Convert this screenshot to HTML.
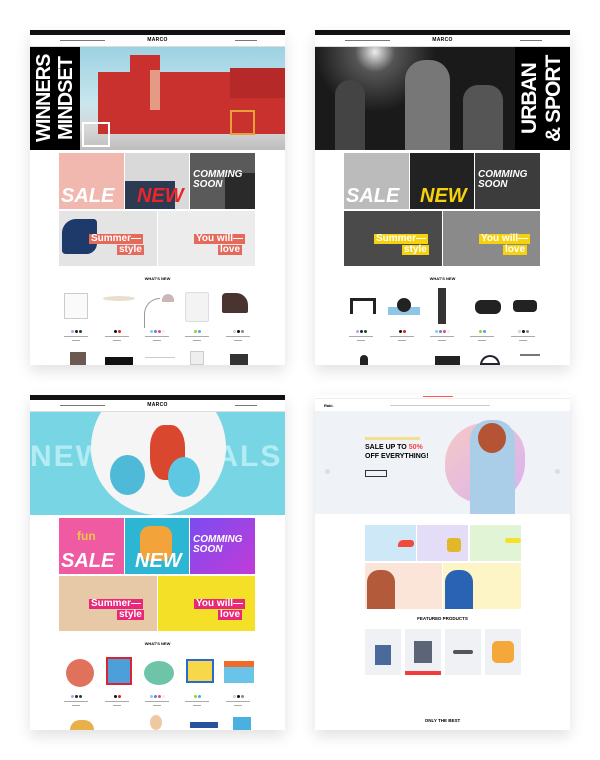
<!DOCTYPE html>
<html><head><meta charset="utf-8"><style>
*{margin:0;padding:0;box-sizing:border-box}
body{width:600px;height:760px;background:#fff;position:relative;overflow:hidden;font-family:"Liberation Sans",sans-serif}
.card{position:absolute;width:255px;height:335px;background:#fff;overflow:hidden;box-shadow:0 6px 14px rgba(0,0,0,.12)}
.a{position:absolute}
.tb{left:0;top:0;width:255px;height:5px;background:#111}
.nav{left:0;top:5px;width:255px;height:12px;background:#fff;border-bottom:1px solid #ddd}
.logo{position:absolute;left:0;width:255px;top:7px;text-align:center;font-size:5px;font-weight:bold;letter-spacing:.3px}
.tile{position:absolute;overflow:hidden}
.big{font-weight:900;font-style:italic;position:absolute;line-height:1}
.lbl{position:absolute;font-weight:bold;font-size:10px;line-height:10px;padding:0 2px}
.wn{position:absolute;left:0;width:255px;top:246px;text-align:center;font-size:4px;font-weight:bold}
.meta{position:absolute;top:300px;width:30px;text-align:center;font-size:0}
.meta i{display:inline-block;width:3px;height:3px;border-radius:50%;margin:0 .5px}
.meta b{display:block;height:1px;background:#aaa;margin:3px auto 0;width:24px}
.meta u{display:block;height:1px;background:#aaa;margin:3px auto 0;width:8px}
.nl{position:absolute;top:10px;height:1px;background:#777}
.hero{position:absolute;left:0;top:17px;width:255px;height:103px;overflow:hidden}
.vt{position:absolute;top:0;height:103px;background:#000;color:#fff;font-weight:900;writing-mode:vertical-rl;transform:rotate(180deg);white-space:nowrap;letter-spacing:-1px;text-align:center}
</style></head><body>

<!-- Card 1: furniture -->
<div class="card" style="left:30px;top:30px">
 <div class="a tb"></div><div class="a nav"></div><div class="logo">MARCO</div>
 <div class="nl" style="left:30px;width:45px"></div><div class="nl" style="left:205px;width:22px"></div>
 <div class="hero" style="background:linear-gradient(#9cd2e2,#c9e6ee 55%,#d6d6d6 80%,#bdbdbd)">
  <div class="a" style="left:68px;top:25px;width:187px;height:62px;background:#c8312e"></div>
  <div class="a" style="left:100px;top:8px;width:30px;height:35px;background:#c8312e"></div>
  <div class="a" style="left:200px;top:21px;width:55px;height:30px;background:#b52a28"></div>
  <div class="a" style="left:120px;top:23px;width:10px;height:40px;background:#e59a85"></div>
  <div class="a" style="left:200px;top:63px;width:25px;height:25px;border:2px solid #e8a03a"></div>
  <div class="a" style="left:52px;top:75px;width:28px;height:25px;border:2px solid #fff"></div>
  <div class="vt" style="left:0;width:50px;font-size:20px;line-height:22px;padding:0 3px">WINNERS<br>MINDSET</div>
 </div>
 <div class="tile" style="left:29px;top:123px;width:65px;height:56px;background:#f0b8ae"><div class="big" style="left:2px;top:33px;color:#fff;font-size:20px">SALE</div></div>
 <div class="tile" style="left:95px;top:123px;width:64px;height:56px;background:#d9d9d9"><div class="a" style="left:0;top:28px;width:50px;height:28px;background:#2d3b52"></div><div class="big" style="left:12px;top:33px;color:#e8262c;font-size:20px">NEW</div></div>
 <div class="tile" style="left:160px;top:123px;width:65px;height:56px;background:#5a5a5a"><div class="a" style="left:35px;top:20px;width:30px;height:36px;background:#2a2a2a"></div><div class="big" style="left:3px;top:17px;color:#fff;font-size:10px">COMMING<br>SOON</div></div>
 <div class="tile" style="left:29px;top:181px;width:98px;height:55px;background:#e4e4e4"><div class="a" style="left:3px;top:8px;width:35px;height:35px;border-radius:40% 10% 30% 10%;background:#1e3a6a"></div><div class="lbl" style="left:30px;top:23px;background:#e46a5c;color:#fff">Summer—</div><div class="lbl" style="left:58px;top:34px;background:#e46a5c;color:#fff">style</div></div>
 <div class="tile" style="left:128px;top:181px;width:97px;height:55px;background:#ececec"><div class="lbl" style="left:36px;top:23px;background:#e46a5c;color:#fff">You will—</div><div class="lbl" style="left:60px;top:34px;background:#e46a5c;color:#fff">love</div></div>
 <div class="wn">WHAT'S NEW</div>
 <div class="a" style="left:34px;top:263px;width:24px;height:26px;border:1px solid #ccc;background:#fafafa"></div>
 <div class="a" style="left:73px;top:266px;width:32px;height:5px;background:#e8dfcc;border-radius:50%"></div>
 <div class="a" style="left:114px;top:268px;width:16px;height:30px;border-top:1px solid #999;border-left:1px solid #999;border-radius:20px 0 0 0"></div>
 <div class="a" style="left:132px;top:264px;width:12px;height:8px;background:#c9b8b5;border-radius:8px 8px 0 0"></div>
 <div class="a" style="left:155px;top:262px;width:24px;height:30px;background:#f3f3f3;border:1px solid #ddd;border-radius:2px"></div>
 <div class="a" style="left:192px;top:263px;width:26px;height:20px;background:#4a3430;border-radius:4px 12px 2px 2px"></div>
 <div class="meta" style="left:31px"><i style="background:#b9a4e8"></i><i style="background:#223"></i><i style="background:#1a4a2a"></i><b></b><u></u></div>
 <div class="meta" style="left:72px"><i style="background:#111"></i><i style="background:#d22"></i><b></b><u></u></div>
 <div class="meta" style="left:112px"><i style="background:#8cc8f0"></i><i style="background:#6a7ae0"></i><i style="background:#e04a7a"></i><i style="background:#eee"></i><b></b><u></u></div>
 <div class="meta" style="left:152px"><i style="background:#9ad02a"></i><i style="background:#4aa8e0"></i><b></b><u></u></div>
 <div class="meta" style="left:193px"><i style="background:#eee;border:1px solid #ccc"></i><i style="background:#111"></i><i style="background:#888"></i><b></b><u></u></div>
 <div class="a" style="left:40px;top:322px;width:16px;height:13px;background:#6a5a50"></div>
 <div class="a" style="left:75px;top:327px;width:28px;height:8px;background:#111"></div>
 <div class="a" style="left:115px;top:327px;width:30px;height:8px;border-top:1px solid #ccc"></div>
 <div class="a" style="left:160px;top:321px;width:14px;height:14px;background:#eee;border:1px solid #ccc"></div>
 <div class="a" style="left:200px;top:324px;width:18px;height:11px;background:#333"></div>
</div>

<!-- Card 2: sport -->
<div class="card" style="left:315px;top:30px">
 <div class="a tb"></div><div class="a nav"></div><div class="logo">MARCO</div>
 <div class="nl" style="left:30px;width:45px"></div><div class="nl" style="left:205px;width:22px"></div>
 <div class="hero" style="background:radial-gradient(circle at 60px 5px,#eee 0,#555 20px,#1a1a1a 60px)">
  <div class="a" style="left:90px;top:13px;width:45px;height:90px;background:#777;border-radius:20px 20px 0 0"></div>
  <div class="a" style="left:20px;top:33px;width:30px;height:70px;background:#444;border-radius:15px 15px 0 0"></div>
  <div class="a" style="left:148px;top:38px;width:40px;height:65px;background:#555;border-radius:15px 15px 0 0"></div>
  <div class="vt" style="left:200px;width:55px;font-size:21px;line-height:24px;padding:0 3px">URBAN<br>&amp; SPORT</div>
 </div>
 <div class="tile" style="left:29px;top:123px;width:65px;height:56px;background:#bbb"><div class="big" style="left:2px;top:33px;color:#fff;font-size:20px">SALE</div></div>
 <div class="tile" style="left:95px;top:123px;width:64px;height:56px;background:#222"><div class="big" style="left:10px;top:33px;color:#f6d20e;font-size:20px">NEW</div></div>
 <div class="tile" style="left:160px;top:123px;width:65px;height:56px;background:#3c3c3c"><div class="big" style="left:3px;top:17px;color:#fff;font-size:10px">COMMING<br>SOON</div></div>
 <div class="tile" style="left:29px;top:181px;width:98px;height:55px;background:#4a4a4a"><div class="lbl" style="left:30px;top:23px;background:#f6d20e;color:#fff">Summer—</div><div class="lbl" style="left:58px;top:34px;background:#f6d20e;color:#fff">style</div></div>
 <div class="tile" style="left:128px;top:181px;width:97px;height:55px;background:#8a8a8a"><div class="lbl" style="left:36px;top:23px;background:#f6d20e;color:#fff">You will—</div><div class="lbl" style="left:60px;top:34px;background:#f6d20e;color:#fff">love</div></div>
 <div class="wn">WHAT'S NEW</div>
 <div class="a" style="left:35px;top:268px;width:26px;height:16px;border:3px solid #222;border-bottom:none"></div>
 <div class="a" style="left:73px;top:277px;width:32px;height:8px;background:#8ec6e6"></div>
 <div class="a" style="left:82px;top:268px;width:14px;height:14px;background:#222;border-radius:50%"></div>
 <div class="a" style="left:123px;top:258px;width:8px;height:36px;background:#333"></div>
 <div class="a" style="left:160px;top:270px;width:26px;height:14px;background:#222;border-radius:6px"></div>
 <div class="a" style="left:198px;top:270px;width:24px;height:12px;background:#222;border-radius:4px"></div>
 <div class="meta" style="left:31px"><i style="background:#b9a4e8"></i><i style="background:#223"></i><i style="background:#1a4a2a"></i><b></b><u></u></div>
 <div class="meta" style="left:72px"><i style="background:#111"></i><i style="background:#d22"></i><b></b><u></u></div>
 <div class="meta" style="left:112px"><i style="background:#8cc8f0"></i><i style="background:#6a7ae0"></i><i style="background:#e04a7a"></i><i style="background:#eee"></i><b></b><u></u></div>
 <div class="meta" style="left:152px"><i style="background:#9ad02a"></i><i style="background:#4aa8e0"></i><b></b><u></u></div>
 <div class="meta" style="left:193px"><i style="background:#eee;border:1px solid #ccc"></i><i style="background:#111"></i><i style="background:#888"></i><b></b><u></u></div>
 <div class="a" style="left:45px;top:325px;width:8px;height:10px;background:#222;border-radius:4px 4px 0 0"></div>
 <div class="a" style="left:120px;top:326px;width:25px;height:9px;background:#222"></div>
 <div class="a" style="left:165px;top:325px;width:20px;height:10px;border:2px solid #223;border-radius:10px 10px 0 0"></div>
 <div class="a" style="left:205px;top:324px;width:20px;height:11px;border-top:2px solid #777"></div>
</div>

<!-- Card 3: toys -->
<div class="card" style="left:30px;top:395px">
 <div class="a tb"></div><div class="a nav"></div><div class="logo">MARCO</div>
 <div class="nl" style="left:30px;width:45px"></div><div class="nl" style="left:205px;width:22px"></div>
 <div class="hero" style="background:#78d6e4">
  <div class="a" style="left:0;top:28px;width:255px;font-size:30px;font-weight:900;color:#b3ecf3;letter-spacing:2px;white-space:nowrap">NEW ARRIVALS</div>
  <div class="a" style="left:61px;top:-32px;width:135px;height:135px;border-radius:50%;background:#f5f5f5"></div>
  <div class="a" style="left:80px;top:43px;width:35px;height:40px;border-radius:50%;background:#4fb9d8"></div>
  <div class="a" style="left:120px;top:13px;width:35px;height:55px;border-radius:40%;background:#d9472f"></div>
  <div class="a" style="left:138px;top:45px;width:32px;height:40px;border-radius:50%;background:#5ec7e2"></div>
 </div>
 <div class="tile" style="left:29px;top:123px;width:65px;height:56px;background:#ef5aa2"><div class="big" style="left:18px;top:12px;color:#e9c84a;font-size:12px;font-style:normal">fun</div><div class="big" style="left:2px;top:33px;color:#fff;font-size:20px">SALE</div></div>
 <div class="tile" style="left:95px;top:123px;width:64px;height:56px;background:#2cb6d3"><div class="a" style="left:15px;top:8px;width:32px;height:35px;background:#f2a33a;border-radius:10px"></div><div class="big" style="left:10px;top:33px;color:#fff;font-size:20px">NEW</div></div>
 <div class="tile" style="left:160px;top:123px;width:65px;height:56px;background:linear-gradient(135deg,#7a4cf0,#c23bd8)"><div class="big" style="left:3px;top:17px;color:#fff;font-size:10px">COMMING<br>SOON</div></div>
 <div class="tile" style="left:29px;top:181px;width:98px;height:55px;background:#e7c9a8"><div class="lbl" style="left:30px;top:23px;background:#e8297a;color:#fff">Summer—</div><div class="lbl" style="left:58px;top:34px;background:#e8297a;color:#fff">style</div></div>
 <div class="tile" style="left:128px;top:181px;width:97px;height:55px;background:#f5e028"><div class="lbl" style="left:36px;top:23px;background:#e8297a;color:#fff">You will—</div><div class="lbl" style="left:60px;top:34px;background:#e8297a;color:#fff">love</div></div>
 <div class="wn">WHAT'S NEW</div>
 <div class="a" style="left:36px;top:264px;width:28px;height:28px;border-radius:50%;background:#e0725c"></div>
 <div class="a" style="left:76px;top:262px;width:26px;height:28px;background:#4c9fd8;border:2px solid #d23"></div>
 <div class="a" style="left:114px;top:266px;width:30px;height:24px;border-radius:50%;background:#6ec4a8"></div>
 <div class="a" style="left:156px;top:264px;width:28px;height:24px;background:#f7d84a;border:2px solid #2a6bd0"></div>
 <div class="a" style="left:194px;top:266px;width:30px;height:22px;background:#6ac3e8;border-top:6px solid #f06b2a"></div>
 <div class="meta" style="left:31px"><i style="background:#b9a4e8"></i><i style="background:#223"></i><i style="background:#1a4a2a"></i><b></b><u></u></div>
 <div class="meta" style="left:72px"><i style="background:#111"></i><i style="background:#d22"></i><b></b><u></u></div>
 <div class="meta" style="left:112px"><i style="background:#8cc8f0"></i><i style="background:#6a7ae0"></i><i style="background:#e04a7a"></i><i style="background:#eee"></i><b></b><u></u></div>
 <div class="meta" style="left:152px"><i style="background:#9ad02a"></i><i style="background:#4aa8e0"></i><b></b><u></u></div>
 <div class="meta" style="left:193px"><i style="background:#eee;border:1px solid #ccc"></i><i style="background:#111"></i><i style="background:#888"></i><b></b><u></u></div>
 <div class="a" style="left:40px;top:325px;width:24px;height:10px;background:#e8b04a;border-radius:10px 10px 0 0"></div>
 <div class="a" style="left:120px;top:320px;width:12px;height:15px;background:#f0c8a0;border-radius:50%"></div>
 <div class="a" style="left:160px;top:327px;width:28px;height:6px;background:#2a50a0"></div>
 <div class="a" style="left:203px;top:322px;width:18px;height:13px;background:#4ab0e0"></div>
</div>

<!-- Card 4: fashion -->
<div class="card" style="left:315px;top:395px">
 <div class="a" style="left:0;top:0;width:255px;height:4px;background:#fff;border-bottom:1px solid #eee"></div>
 <div class="a" style="left:108px;top:1px;width:30px;height:1px;background:#f55"></div>
 <div class="a" style="left:0;top:4px;width:255px;height:12px;background:#fff"></div>
 <div class="a" style="left:9px;top:8px;font-size:4px;font-weight:bold">Raki.</div>
 <div class="a" style="left:75px;top:10px;width:100px;height:1px;background:#ccc"></div>
 <div class="a" style="left:0;top:16px;width:255px;height:103px;background:#eff2f7"></div>
 <div class="a" style="left:130px;top:28px;width:80px;height:80px;border-radius:50% 40% 50% 45%;background:linear-gradient(135deg,#f6c9c6,#d8b1f0)"></div>
 <div class="a" style="left:155px;top:25px;width:45px;height:94px;background:#aacde8;border-radius:20px 20px 0 0"></div>
 <div class="a" style="left:163px;top:28px;width:28px;height:30px;border-radius:50%;background:#b55335"></div>
 <div class="a" style="left:50px;top:42px;width:55px;height:3px;background:#f3e08a"></div>
 <div class="a" style="left:50px;top:49px;font-size:7px;font-weight:900;line-height:8.5px;white-space:nowrap">SALE UP TO <span style="color:#f04848">50%</span><br>OFF EVERYTHING!</div>
 <div class="a" style="left:50px;top:75px;width:22px;height:7px;border:1px solid #333"></div>
 <div class="a" style="left:10px;top:74px;width:5px;height:5px;border-radius:50%;background:#ddd"></div>
 <div class="a" style="left:240px;top:74px;width:5px;height:5px;border-radius:50%;background:#ddd"></div>
 <div class="a" style="left:50px;top:130px;width:51px;height:36px;background:#cfe8f8"></div>
 <div class="a" style="left:83px;top:145px;width:16px;height:7px;background:#ef4b3a;border-radius:5px 3px 3px 0"></div>
 <div class="a" style="left:102px;top:130px;width:51px;height:36px;background:#e3ddf8"></div>
 <div class="a" style="left:132px;top:143px;width:14px;height:14px;background:#e2b82a;border-radius:3px"></div>
 <div class="a" style="left:155px;top:130px;width:51px;height:36px;background:#e2f4d6"></div>
 <div class="a" style="left:190px;top:143px;width:16px;height:5px;background:#f6e02a;border-radius:3px"></div>
 <div class="a" style="left:50px;top:168px;width:77px;height:46px;background:#fbe5d9"></div>
 <div class="a" style="left:52px;top:175px;width:28px;height:39px;background:#b25a3a;border-radius:12px 12px 0 0"></div>
 <div class="a" style="left:128px;top:168px;width:78px;height:46px;background:#fdf5c5"></div>
 <div class="a" style="left:130px;top:175px;width:28px;height:39px;background:#2a63b4;border-radius:12px 12px 0 0"></div>
 <div class="a" style="left:0;top:221px;width:255px;text-align:center;font-size:4.5px;font-weight:bold">FEATURED PRODUCTS</div>
 <div class="a" style="left:50px;top:234px;width:36px;height:46px;background:#f0f1f4"></div>
 <div class="a" style="left:60px;top:250px;width:16px;height:20px;background:#4a6a9c"></div>
 <div class="a" style="left:90px;top:234px;width:36px;height:46px;background:#f0f1f4"></div>
 <div class="a" style="left:99px;top:246px;width:18px;height:22px;background:#5c6478"></div>
 <div class="a" style="left:90px;top:276px;width:36px;height:4px;background:#f03c3c"></div>
 <div class="a" style="left:130px;top:234px;width:36px;height:46px;background:#f0f1f4"></div>
 <div class="a" style="left:138px;top:255px;width:20px;height:4px;background:#555;border-radius:2px"></div>
 <div class="a" style="left:170px;top:234px;width:36px;height:46px;background:#f0f1f4"></div>
 <div class="a" style="left:177px;top:246px;width:22px;height:22px;background:#f4a83a;border-radius:5px"></div>
 <div class="a" style="left:0;top:323px;width:255px;text-align:center;font-size:4.5px;font-weight:bold">ONLY THE BEST</div>
</div>

</body></html>
